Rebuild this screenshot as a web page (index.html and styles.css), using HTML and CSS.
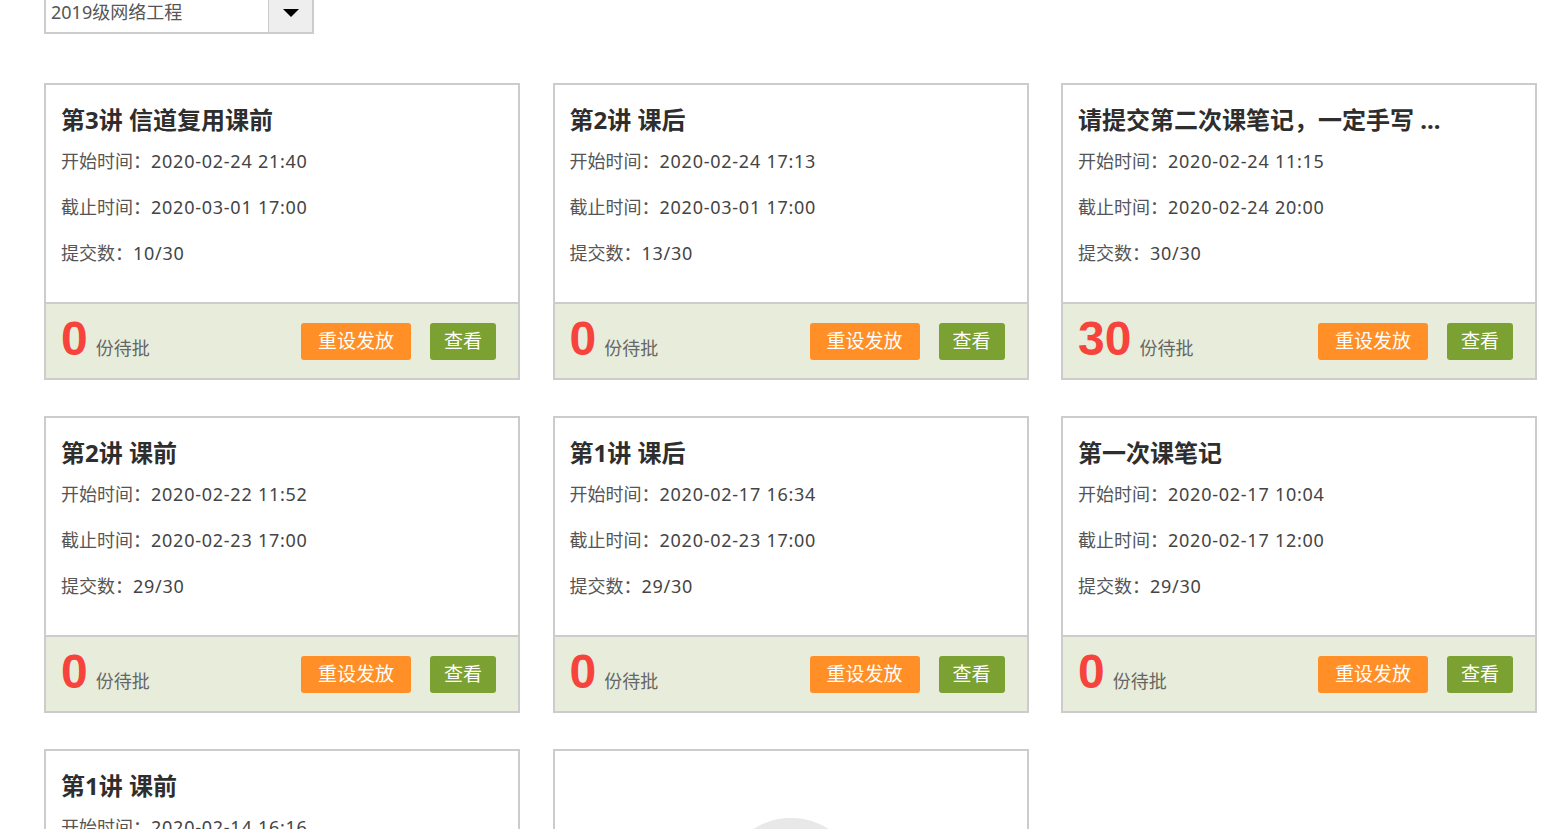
FILE: index.html
```html
<!DOCTYPE html>
<html lang="zh-CN">
<head>
  <meta charset="UTF-8">
  <meta name="viewport" content="width=device-width, initial-scale=1.0">
  <title>作业列表</title>
  <link rel="stylesheet" href="styles.css">
</head>
<body>
<div class="page">
  <div class="toolbar">
    <div class="class-select">
      <span class="class-name">2019级网络工程</span>
      <span class="select-btn"><span class="caret"></span></span>
    </div>
  </div>

  <div class="task-grid">
    <div class="task-card">
      <div class="task-body">
        <h3>第3讲 信道复用课前</h3>
        <p>开始时间：<span class="val">2020-02-24 21:40</span></p>
        <p>截止时间：<span class="val">2020-03-01 17:00</span></p>
        <p>提交数：<span class="val">10/30</span></p>
      </div>
      <div class="task-footer">
        <div class="pending"><span class="count">0</span><span class="label">份待批</span></div>
        <button class="btn btn-reset">重设发放</button>
        <button class="btn btn-view">查看</button>
      </div>
    </div>

    <div class="task-card">
      <div class="task-body">
        <h3>第2讲 课后</h3>
        <p>开始时间：<span class="val">2020-02-24 17:13</span></p>
        <p>截止时间：<span class="val">2020-03-01 17:00</span></p>
        <p>提交数：<span class="val">13/30</span></p>
      </div>
      <div class="task-footer">
        <div class="pending"><span class="count">0</span><span class="label">份待批</span></div>
        <button class="btn btn-reset">重设发放</button>
        <button class="btn btn-view">查看</button>
      </div>
    </div>

    <div class="task-card">
      <div class="task-body">
        <h3>请提交第二次课笔记，一定手写 ...</h3>
        <p>开始时间：<span class="val">2020-02-24 11:15</span></p>
        <p>截止时间：<span class="val">2020-02-24 20:00</span></p>
        <p>提交数：<span class="val">30/30</span></p>
      </div>
      <div class="task-footer">
        <div class="pending"><span class="count">30</span><span class="label">份待批</span></div>
        <button class="btn btn-reset">重设发放</button>
        <button class="btn btn-view">查看</button>
      </div>
    </div>

    <div class="task-card">
      <div class="task-body">
        <h3>第2讲 课前</h3>
        <p>开始时间：<span class="val">2020-02-22 11:52</span></p>
        <p>截止时间：<span class="val">2020-02-23 17:00</span></p>
        <p>提交数：<span class="val">29/30</span></p>
      </div>
      <div class="task-footer">
        <div class="pending"><span class="count">0</span><span class="label">份待批</span></div>
        <button class="btn btn-reset">重设发放</button>
        <button class="btn btn-view">查看</button>
      </div>
    </div>

    <div class="task-card">
      <div class="task-body">
        <h3>第1讲 课后</h3>
        <p>开始时间：<span class="val">2020-02-17 16:34</span></p>
        <p>截止时间：<span class="val">2020-02-23 17:00</span></p>
        <p>提交数：<span class="val">29/30</span></p>
      </div>
      <div class="task-footer">
        <div class="pending"><span class="count">0</span><span class="label">份待批</span></div>
        <button class="btn btn-reset">重设发放</button>
        <button class="btn btn-view">查看</button>
      </div>
    </div>

    <div class="task-card">
      <div class="task-body">
        <h3>第一次课笔记</h3>
        <p>开始时间：<span class="val">2020-02-17 10:04</span></p>
        <p>截止时间：<span class="val">2020-02-17 12:00</span></p>
        <p>提交数：<span class="val">29/30</span></p>
      </div>
      <div class="task-footer">
        <div class="pending"><span class="count">0</span><span class="label">份待批</span></div>
        <button class="btn btn-reset">重设发放</button>
        <button class="btn btn-view">查看</button>
      </div>
    </div>

    <div class="task-card">
      <div class="task-body">
        <h3>第1讲 课前</h3>
        <p>开始时间：<span class="val">2020-02-14 16:16</span></p>
        <p>截止时间：<span class="val">2020-02-20 17:00</span></p>
        <p>提交数：<span class="val">30/30</span></p>
      </div>
      <div class="task-footer">
        <div class="pending"><span class="count">0</span><span class="label">份待批</span></div>
        <button class="btn btn-reset">重设发放</button>
        <button class="btn btn-view">查看</button>
      </div>
    </div>

    <div class="task-card add-card">
      <div class="add-circle"></div>
    </div>
  </div>
</div>
</body>
</html>
```

FILE: styles.css
```css
body {
  margin: 0;
  background: #fff;
  font-family: "Noto Sans", "Noto Sans CJK SC", sans-serif;
  color: #555;
}
.page {
  padding: 0 0 40px 44px;
}
.toolbar {
  margin-top: -10px;
  margin-bottom: 49px;
}
.class-select {
  display: flex;
  width: 266px;
  height: 40px;
  border: 2px solid #ccc;
  background: #fff;
}
.class-name {
  flex: 1;
  padding-left: 5px;
  padding-top: 4px;
  font-size: 18px;
  line-height: 32px;
  color: #555;
}
.select-btn {
  width: 43px;
  background: #eee;
  border-left: 1px solid #ccc;
  display: flex;
  align-items: center;
  justify-content: center;
  padding-top: 1px;
}
.caret {
  width: 0;
  height: 0;
  border-left: 8px solid transparent;
  border-right: 8px solid transparent;
  border-top: 8px solid #000;
}
.task-grid {
  display: grid;
  grid-template-columns: repeat(3, 476px);
  column-gap: 32.5px;
  row-gap: 36px;
}
.task-card {
  box-sizing: border-box;
  height: 297px;
  border: 2px solid #ccc;
  background: #fff;
  display: flex;
  flex-direction: column;
}
.task-body {
  height: 217px;
  box-sizing: border-box;
  padding: 19px 15px 0 15px;
}
.task-body h3 {
  margin: 0 0 2px;
  font-size: 24px;
  line-height: 32px;
  font-weight: bold;
  color: #2e2e2e;
  white-space: nowrap;
}
.task-body p {
  margin: 0;
  font-size: 18px;
  line-height: 46px;
  color: #555;
}
.val {
  letter-spacing: 0.75px;
  color: #444;
}
.task-footer {
  flex: 1;
  border-top: 2px solid #ccc;
  background: #e8eddb;
  display: flex;
  align-items: center;
  padding: 0 22px 0 15px;
}
.pending {
  flex: 1;
  display: flex;
  align-items: baseline;
  margin-top: -4px;
}
.count {
  font-family: "Liberation Sans", Arial, sans-serif;
  font-size: 48px;
  font-weight: bold;
  line-height: 50px;
  color: #f6443c;
}
.label {
  margin-left: 8px;
  font-size: 18px;
  color: #666;
}
.btn {
  height: 37px;
  border: none;
  border-radius: 3px;
  color: #fff;
  font-family: "Noto Sans", "Noto Sans CJK SC", sans-serif;
  font-size: 19px;
  line-height: 37px;
  padding: 0;
}
.btn-reset {
  width: 110px;
  background: #ff8f26;
}
.btn-view {
  width: 66px;
  margin-left: 19px;
  background: #7ba133;
}
.add-card {
  align-items: center;
  padding-top: 67px;
}
.add-circle {
  width: 142px;
  height: 142px;
  border-radius: 50%;
  background: #e8e8e8;
}
```
